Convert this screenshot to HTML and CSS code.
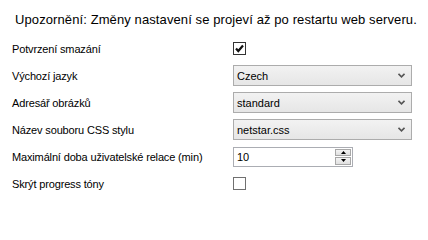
FILE: index.html
```html
<!DOCTYPE html>
<html lang="cs">
<head>
<meta charset="utf-8">
<title>Nastavení</title>
<link rel="stylesheet" href="styles.css">
</head>
<body>
<div class="page">
  <div class="notice">Upozornění: Změny nastavení se projeví až po restartu web serveru.</div>
  <div class="form">
    <div class="label">Potvrzení smazání</div>
    <div class="ctl">
      <span class="check checked">
        <svg width="11" height="11" viewBox="0 0 11 11"><path d="M2 5.5 L4.3 8 L9 2.5" fill="none" stroke="#111" stroke-width="2.2"/></svg>
      </span>
    </div>

    <div class="label">Výchozí jazyk</div>
    <div class="ctl">
      <div class="select"><span>Czech</span>
        <svg class="chev" width="7" height="5" viewBox="0 0 7 5"><path d="M0.5 0.8 L3.5 3.8 L6.5 0.8" fill="none" stroke="#555" stroke-width="1.6"/></svg>
      </div>
    </div>

    <div class="label">Adresář obrázků</div>
    <div class="ctl">
      <div class="select"><span>standard</span>
        <svg class="chev" width="7" height="5" viewBox="0 0 7 5"><path d="M0.5 0.8 L3.5 3.8 L6.5 0.8" fill="none" stroke="#555" stroke-width="1.6"/></svg>
      </div>
    </div>

    <div class="label">Název souboru CSS stylu</div>
    <div class="ctl">
      <div class="select"><span>netstar.css</span>
        <svg class="chev" width="7" height="5" viewBox="0 0 7 5"><path d="M0.5 0.8 L3.5 3.8 L6.5 0.8" fill="none" stroke="#555" stroke-width="1.6"/></svg>
      </div>
    </div>

    <div class="label">Maximální doba uživatelské relace (min)</div>
    <div class="ctl">
      <div class="number"><span class="val">10</span>
        <div class="spin">
          <div class="btn"><svg width="5" height="3" viewBox="0 0 5 3"><path d="M0 3 L2.5 0 L5 3 Z" fill="#000"/></svg></div>
          <div class="btn"><svg width="5" height="3" viewBox="0 0 5 3"><path d="M0 0 L2.5 3 L5 0 Z" fill="#000"/></svg></div>
        </div>
      </div>
    </div>

    <div class="label">Skrýt progress tóny</div>
    <div class="ctl">
      <span class="check"></span>
    </div>
  </div>
</div>
</body>
</html>
```

FILE: styles.css
```css
html, body {
  margin: 0;
  padding: 0;
  background: #ffffff;
}
body {
  font-family: "Liberation Sans", Arial, sans-serif;
  color: #000;
}
.page {
  width: 428px;
  height: 205px;
  padding: 0 0 0 12px;
  box-sizing: border-box;
}
.notice {
  font-size: 13px;
  letter-spacing: 0.1px;
  height: 35px;
  line-height: 15px;
  padding: 12px 0 0 3px;
  box-sizing: border-box;
  white-space: nowrap;
}
.form {
  display: grid;
  grid-template-columns: 221px 179px;
  grid-auto-rows: 27px;
}
.label {
  font-size: 11px;
  letter-spacing: -0.15px;
  display: flex;
  align-items: center;
  white-space: nowrap;
}
.ctl {
  display: flex;
  align-items: center;
}
.check {
  width: 13px;
  height: 13px;
  box-sizing: border-box;
  border: 1px solid #707070;
  background: #fff;
  display: flex;
  align-items: center;
  justify-content: center;
}
.check.checked {
  border-color: #333;
}
.select {
  width: 179px;
  height: 21px;
  box-sizing: border-box;
  border: 1px solid #acacac;
  background: linear-gradient(#f2f2f2, #e6e6e6);
  display: flex;
  align-items: center;
  justify-content: space-between;
  padding: 0 6px 0 3px;
  font-size: 11px;
}
.number {
  width: 120px;
  height: 20px;
  box-sizing: border-box;
  border: 1px solid #abadb3;
  background: #fff;
  display: flex;
  align-items: stretch;
  justify-content: space-between;
  font-size: 11px;
}
.number .val {
  display: flex;
  align-items: center;
  padding-left: 3px;
}
.spin {
  width: 16px;
  display: flex;
  flex-direction: column;
  gap: 1px;
  padding: 1px;
  background: #fff;
}
.btn {
  flex: 1;
  border: 1px solid #a8a8a8;
  background: linear-gradient(#f4f4f4, #e0e0e0);
  display: flex;
  align-items: center;
  justify-content: center;
}
.btn svg {
  display: block;
}
```
